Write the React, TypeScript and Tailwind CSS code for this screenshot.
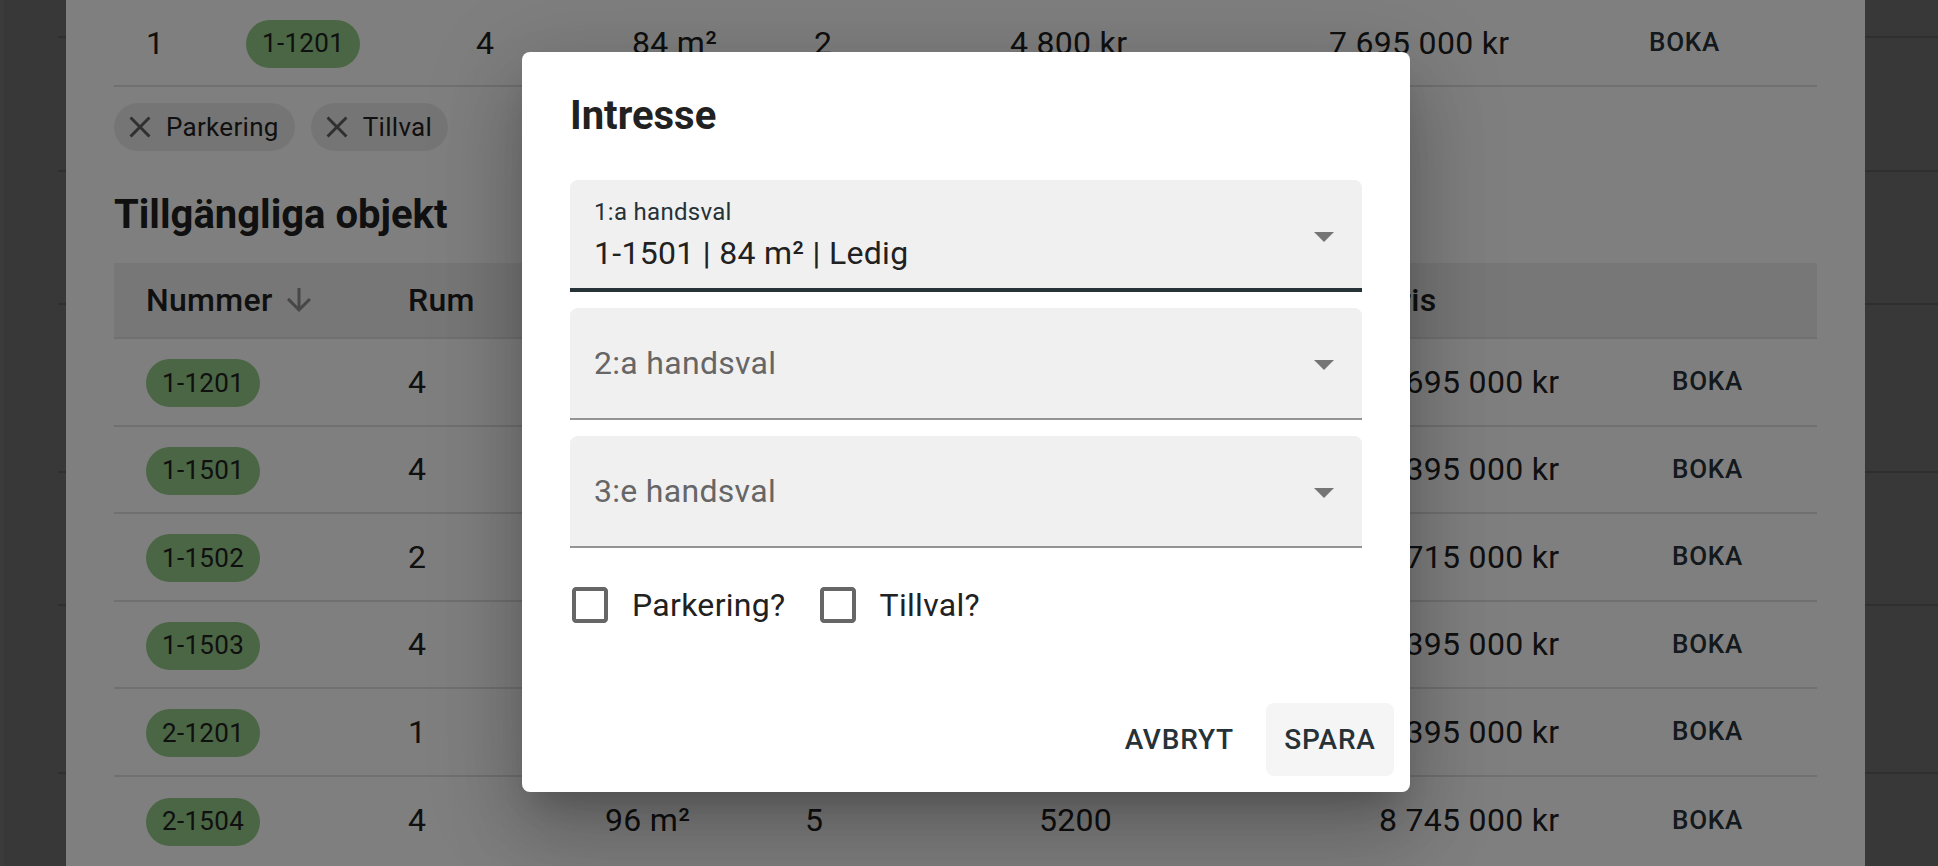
import React from 'react';

type Row = {
  nummer: string;
  rum: string;
  storlek: string;
  vaning: string;
  avgift: string;
  pris: string;
};

const rows: Row[] = [
  { nummer: '1-1201', rum: '4', storlek: '84 m²', vaning: '2', avgift: '4800', pris: '7 695 000 kr' },
  { nummer: '1-1501', rum: '4', storlek: '84 m²', vaning: '5', avgift: '4800', pris: '7 395 000 kr' },
  { nummer: '1-1502', rum: '2', storlek: '52 m²', vaning: '5', avgift: '3100', pris: '4 715 000 kr' },
  { nummer: '1-1503', rum: '4', storlek: '84 m²', vaning: '5', avgift: '4800', pris: '7 395 000 kr' },
  { nummer: '2-1201', rum: '1', storlek: '34 m²', vaning: '2', avgift: '2200', pris: '2 395 000 kr' },
  { nummer: '2-1504', rum: '4', storlek: '96 m²', vaning: '5', avgift: '5200', pris: '8 745 000 kr' },
];

function NumberChip({ label }: { label: string }) {
  return (
    <span className="inline-flex h-[48px] items-center rounded-full bg-[#94cc88] px-[16px] text-[26px] tracking-[0.3px] text-[#212121]">
      {label}
    </span>
  );
}

function CloseIcon() {
  return (
    <svg viewBox="0 0 24 24" className="ml-[8px] mr-[-8px] h-[36px] w-[36px] fill-[#616161]">
      <path d="M19 6.41 17.59 5 12 10.59 6.41 5 5 6.41 10.59 12 5 17.59 6.41 19 12 13.41 17.59 19 19 17.59 13.41 12z" />
    </svg>
  );
}

function FilterChip({ label }: { label: string }) {
  return (
    <span className="inline-flex h-[48px] items-center rounded-full bg-[#ebebeb] text-[26px] tracking-[0.3px] text-[#212121]">
      <CloseIcon />
      <span className="px-[16px]">{label}</span>
    </span>
  );
}

function SideStrip({ inset }: { inset: boolean }) {
  const heights = [38, 134, 133, 168, 133, 168];
  return (
    <div className="flex h-full flex-col bg-[#717171]">
      {heights.map((h, i) => (
        <div
          key={i}
          style={{ height: h }}
          className={`shrink-0 border-b-2 border-[#5f5f5f] ${inset ? 'ml-[54px]' : ''}`}
        />
      ))}
    </div>
  );
}

function DropArrow() {
  return (
    <svg viewBox="0 0 24 24" className="mr-[14px] h-[48px] w-[48px] shrink-0 self-center fill-[#757575]">
      <path d="M7 10l5 5 5-5z" />
    </svg>
  );
}

function CheckboxLabel({ label }: { label: string }) {
  return (
    <label className="ml-[-22px] mr-[32px] flex items-center">
      <span className="p-[18px]">
        <svg viewBox="0 0 24 24" className="h-[48px] w-[48px] fill-[#666666]">
          <path d="M19 5v14H5V5h14m0-2H5c-1.11 0-2 .9-2 2v14c0 1.1.89 2 2 2h14c1.1 0 2-.9 2-2V5c0-1.1-.9-2-2-2z" />
        </svg>
      </span>
      <span className="text-[32px] tracking-[0.3px] text-[#212121]">{label}</span>
    </label>
  );
}

export default function App() {
  return (
    <div className="relative h-[866px] w-[1938px] overflow-hidden font-['Roboto','Liberation_Sans',sans-serif]">
      <div className="flex h-full">
        {/* left edge */}
        <div className="w-[66px] shrink-0 border-l-[4px] border-[#767676]">
          <SideStrip inset />
        </div>

        {/* page */}
        <div className="w-[1799px] shrink-0 bg-white px-[48px]">
          {/* previous selection row */}
          <div className="grid h-[87px] grid-cols-[100px_230px_156px_182px_196px_319px_320px_1fr] items-center border-b-2 border-[#e0e0e0] pl-[32px] text-[32px] tracking-[0.3px] text-[#212121]">
            <span>1</span>
            <span>
              <NumberChip label="1-1201" />
            </span>
            <span>4</span>
            <span>84 m²</span>
            <span>2</span>
            <span>4 800 kr</span>
            <span>7 695 000 kr</span>
            <span className="text-[26px] font-medium tracking-[0.74px] text-[#263238]">BOKA</span>
          </div>

          <div className="mt-[16px] flex gap-[16px]">
            <FilterChip label="Parkering" />
            <FilterChip label="Tillval" />
          </div>

          <h2 className="mt-[32px] text-[40px] font-bold leading-[64px] text-[#212121]">Tillgängliga objekt</h2>

          <div className="mt-[16px]">
            <div className="grid h-[76px] grid-cols-[262px_197px_200px_234px_340px_293px_1fr] items-center border-b-2 border-[#e0e0e0] bg-[#eeeeee] pl-[32px] text-[32px] font-medium tracking-[0.3px] text-[#212121]">
              <span className="flex items-center">
                Nummer
                <svg viewBox="0 0 24 24" className="ml-[8px] h-[36px] w-[36px] fill-[#8f8f8f]">
                  <path d="M20 12l-1.41-1.41L13 16.17V4h-2v12.17l-5.58-5.59L4 12l8 8 8-8z" />
                </svg>
              </span>
              <span>Rum</span>
              <span>Storlek</span>
              <span>Våning</span>
              <span>Avgift</span>
              <span>Pris</span>
              <span />
            </div>
            {rows.map((r) => (
              <div
                key={r.nummer}
                className="grid h-[87.5px] grid-cols-[262px_197px_200px_234px_340px_293px_1fr] items-center border-b-2 border-[#e0e0e0] pl-[32px] text-[32px] tracking-[0.3px] text-[#212121] last:border-b-0"
              >
                <span>
                  <NumberChip label={r.nummer} />
                </span>
                <span>{r.rum}</span>
                <span>{r.storlek}</span>
                <span>{r.vaning}</span>
                <span>{r.avgift}</span>
                <span>{r.pris}</span>
                <span className="text-[26px] font-medium tracking-[0.74px] text-[#263238]">BOKA</span>
              </div>
            ))}
          </div>
        </div>

        {/* right edge */}
        <div className="flex-1">
          <SideStrip inset={false} />
        </div>
      </div>

      {/* backdrop + dialog */}
      <div className="absolute inset-0 flex items-start bg-black/50 pl-[522px] pt-[52px]">
        <div className="flex w-[888px] flex-col rounded-[8px] bg-white shadow-[0_22px_30px_-14px_rgba(0,0,0,0.2),0_48px_76px_6px_rgba(0,0,0,0.14),0_18px_92px_16px_rgba(0,0,0,0.12)]">
          <h2 className="px-[48px] pb-[32px] pt-[32px] text-[40px] font-bold leading-[64px] text-[#212121]">Intresse</h2>

          <div className="flex flex-col px-[48px] pb-[40px]">
            <div className="flex flex-col gap-[16px]">
              {/* focused select */}
              <div className="flex h-[112px] rounded-t-[8px] bg-[#f0f0f0] shadow-[inset_0_-4px_0_#263238]">
                <div className="flex flex-1 flex-col pl-[24px] pt-[14px] tracking-[0.3px]">
                  <span className="text-[24px] leading-[36px] text-[#263238]">1:a handsval</span>
                  <span className="text-[32px] leading-[46px] text-[#212121]">1-1501 | 84 m² | Ledig</span>
                </div>
                <DropArrow />
              </div>

              <div className="flex h-[112px] rounded-t-[8px] bg-[#f0f0f0] shadow-[inset_0_-2px_0_#949494]">
                <div className="flex-1 pl-[24px] pt-[32px] text-[32px] leading-[46px] tracking-[0.3px] text-[#666666]">2:a handsval</div>
                <DropArrow />
              </div>

              <div className="flex h-[112px] rounded-t-[8px] bg-[#f0f0f0] shadow-[inset_0_-2px_0_#949494]">
                <div className="flex-1 pl-[24px] pt-[32px] text-[32px] leading-[46px] tracking-[0.3px] text-[#666666]">3:e handsval</div>
                <DropArrow />
              </div>
            </div>

            <div className="mt-[15px] flex">
              <CheckboxLabel label="Parkering?" />
              <CheckboxLabel label="Tillval?" />
            </div>
          </div>

          <div className="flex justify-end gap-[16px] p-[16px]">
            <button className="h-[73px] min-w-[128px] rounded-[8px] px-[16px] text-[28px] font-medium uppercase tracking-[0.8px] text-[#263238]">
              Avbryt
            </button>
            <button className="h-[73px] min-w-[128px] rounded-[8px] bg-[#f5f5f6] px-[16px] text-[28px] font-medium uppercase tracking-[0.8px] text-[#263238]">
              Spara
            </button>
          </div>
        </div>
      </div>
    </div>
  );
}
